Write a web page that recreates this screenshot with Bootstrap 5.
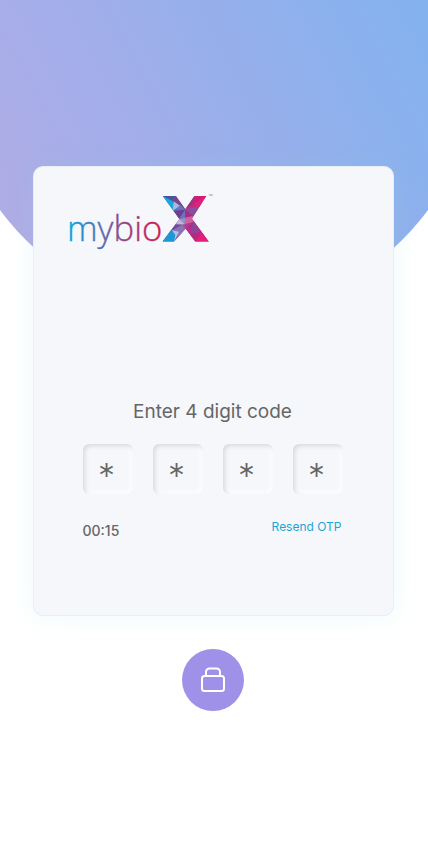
<!DOCTYPE html>
<html lang="en">
<head>
<meta charset="utf-8">
<meta name="viewport" content="width=device-width, initial-scale=1">
<title>mybioX - Verify code</title>
<link href="https://cdn.jsdelivr.net/npm/bootstrap@5.3.0/dist/css/bootstrap.min.css" rel="stylesheet">
<style>
  body { font-family: Inter, "Open Sans", sans-serif; color: #666; background: #fff; }
  .screen { overflow: hidden; padding: 166px 34px 32px 33px; }
  .backdrop { width: 532px; height: 532px; top: -214px; left: 50%; margin-left: -266px; border-radius: 50%; background: linear-gradient(62deg, #b1ace4 10%, #a3aeea 34%, #82b2ee 80%); }
  .otp-card { background: #f5f7fb; border: 1px solid #e9edf5; border-radius: 10px; box-shadow: 0 0 24px rgba(150, 215, 225, .16); max-width: 420px; padding: 18px 27px 74px 25px; }
  .brand-logo { width: 160px; height: 70px; margin-bottom: 143px; margin-left: 1px; }
  .otp-form { width: 260px; }
  .otp-title { font-size: 19px; line-height: 28px; margin-bottom: 18px; font-weight: 400; }
  .otp-digit { width: 50px; height: 50px; border: 0; border-radius: 6px; background: #f5f7fb; color: #666; font-size: 34px; font-weight: 300; line-height: 40px; padding: 12px 2px 0 0; box-shadow: inset 2px 2px 4px #d9dade, inset -2px -2px 4px #fff; outline-offset: 2px; }
  .otp-meta { margin-top: 23px; }
  .timer { font-size: 14px; line-height: 20px; font-weight: 500; padding-top: 4px; }
  .resend { font-size: 12px; line-height: 20px; color: #1ca6d3; padding-right: 1px; }
  .lock-btn { width: 62px; height: 62px; background: #9f90e8; margin: 33px 1px 0 0; }
</style>
<script src="https://cdn.jsdelivr.net/npm/bootstrap@5.3.0/dist/js/bootstrap.bundle.min.js"></script>
</head>
<body>
<main class="screen position-relative min-vh-100">
  <div class="backdrop position-absolute"></div>
  <form class="position-relative d-flex flex-column align-items-center">
    <section class="otp-card w-100">
      <svg class="brand-logo d-block" viewBox="0 0 480 210" role="img" aria-label="mybioX">
        <defs>
          <linearGradient id="word" gradientUnits="userSpaceOnUse" x1="24" y1="0" x2="304" y2="0">
            <stop offset="0" stop-color="#08a5df"/><stop offset=".35" stop-color="#5a6db0"/><stop offset=".6" stop-color="#914783"/><stop offset="1" stop-color="#d0184f"/>
          </linearGradient>
          <clipPath id="xShape"><path d="M308 33H348L376 72 403 33H439L396 101 447 170H406L377 131 342 170H307L358 102Z"/></clipPath>
        </defs>
        <text x="21" y="168" font-family="Open Sans, sans-serif" font-weight="300" font-size="104" fill="url(#word)" stroke="url(#word)" stroke-width="1">mybio</text>
        <g clip-path="url(#xShape)">
          <path fill="#8a559c" d="M300 25H380V175H300Z"/>
          <path fill="#b32f86" d="M380 25H450V175H380Z"/>
          <path fill="#14a8df" d="M308 33 336 46 345 62 338 76Z"/>
          <path fill="#46579e" d="M308 33H348L336 47Z"/>
          <path fill="#76458a" d="M348 33 375 73 336 47Z"/>
          <path fill="#a8b8df" d="M341 49 362 64 338 78Z"/>
          <path fill="#5878c4" d="M362 60 376 75 338 78Z"/>
          <path fill="#6d408f" d="M340 77 376 74 357 102Z"/>
          <path fill="#6875bb" d="M376 73 376 98 357 102Z"/>
          <path fill="#903b86" d="M375 73 403 33 397 60Z"/>
          <path fill="#b52c80" d="M402 33H413L397 60Z"/>
          <path fill="#d41b75" d="M412 33H439L397 60Z"/>
          <path fill="#e3207d" d="M439 33 419 66 397 60Z"/>
          <path fill="#c72d7b" d="M397 60 419 66 375 73Z"/>
          <path fill="#87509f" d="M375 73 419 64 398 93Z"/>
          <path fill="#a62b83" d="M375 73 398 93 376 98Z"/>
          <path fill="#d160a0" d="M376 98 398 93 400 112 374 118Z"/>
          <path fill="#b33a8f" d="M374 118 400 112 377 131Z"/>
          <path fill="#9194c9" d="M376 98 374 118 355 103Z"/>
          <path fill="#c3b4da" d="M357 102 374 118 347 120Z"/>
          <path fill="#6e4a9c" d="M347 118 366 119 330 140Z"/>
          <path fill="#8f70b4" d="M366 119 377 131 354 157 335 137Z"/>
          <path fill="#258fc9" d="M332 134 345 143 307 170Z"/>
          <path fill="#a4c6e9" d="M336 136 357 140 342 170Z"/>
          <path fill="#1c99d5" d="M307 170 336 136 346 150 342 170Z"/>
          <path fill="#b72c89" d="M376 131 400 110 397 158Z"/>
          <path fill="#8e4498" d="M400 105 423 142 390 148Z"/>
          <path fill="#d02080" d="M400 105 447 170 423 142Z"/>
          <path fill="#e71c7b" d="M423 142 447 170H406Z"/>
          <path fill="#bb267e" d="M390 147 423 142 406 170Z"/>
        </g>
        <text x="446" y="38" font-family="Open Sans, sans-serif" font-size="16" fill="#777">™</text>
      </svg>
      <div class="otp-form mx-auto">
        <h1 class="otp-title text-center">Enter 4 digit code</h1>
        <div class="d-flex justify-content-between">
          <input class="otp-digit text-center" type="text" maxlength="1" value="*" aria-label="Digit 1">
          <input class="otp-digit text-center" type="text" maxlength="1" value="*" aria-label="Digit 2">
          <input class="otp-digit text-center" type="text" maxlength="1" value="*" aria-label="Digit 3">
          <input class="otp-digit text-center" type="text" maxlength="1" value="*" aria-label="Digit 4">
        </div>
        <div class="otp-meta d-flex justify-content-between align-items-start">
          <span class="timer">00:15</span>
          <a class="resend text-decoration-none" href="#resend">Resend OTP</a>
        </div>
      </div>
    </section>
    <button class="lock-btn btn rounded-circle p-0 border-0 d-flex align-items-center justify-content-center" type="submit" aria-label="Verify code">
      <svg width="26" height="26" viewBox="0 0 26 26" fill="none" stroke="#fff" stroke-width="2"><rect x="2" y="9" width="22" height="15" rx="2.5"/><path d="M6 9V5a3.500 3.500 0 0 1 3.500-3.500h7A3.500 3.500 0 0 1 20 5v4"/></svg>
    </button>
  </form>
</main>
</body>
</html>
